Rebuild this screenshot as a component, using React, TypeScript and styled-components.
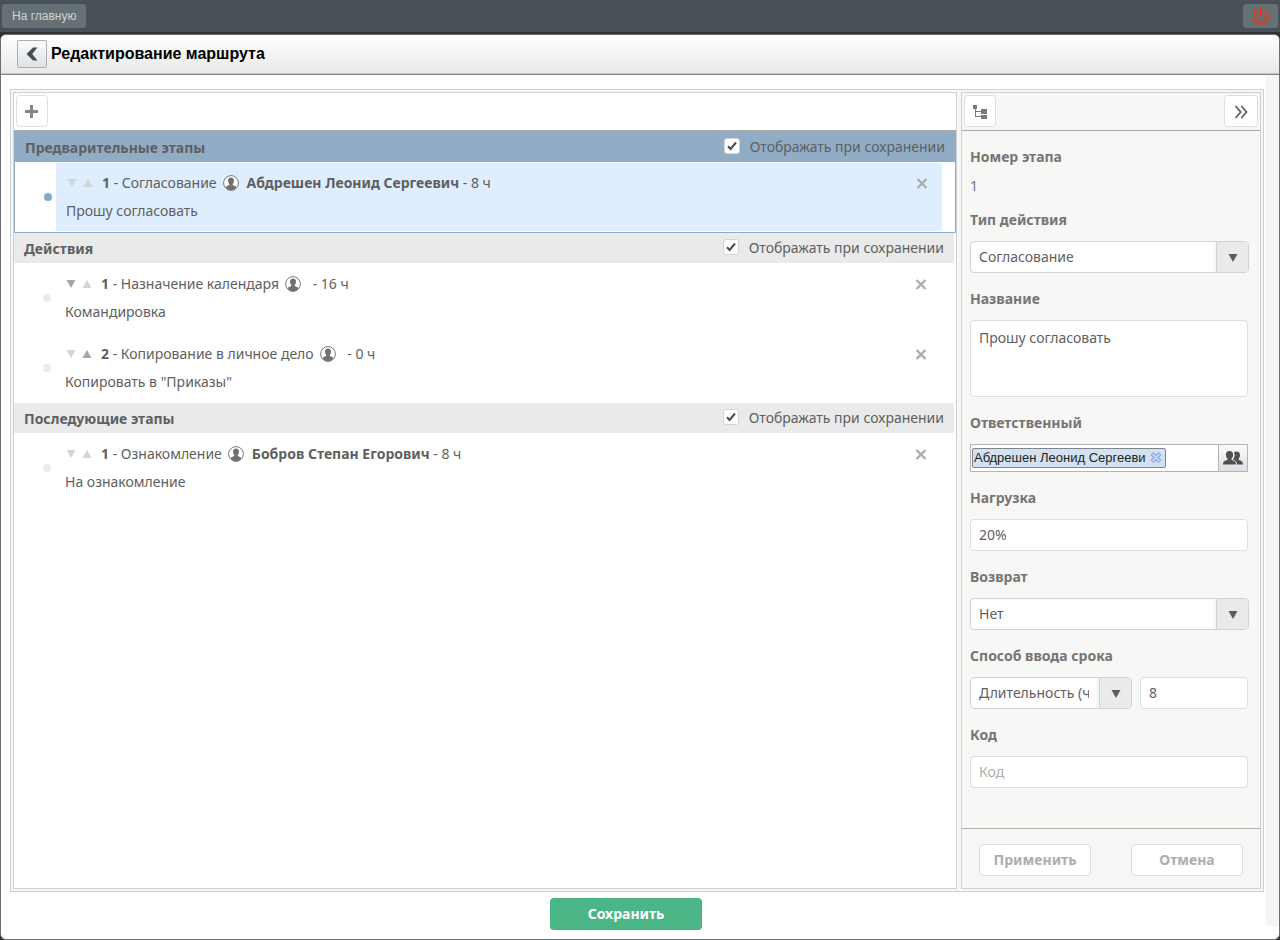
import React, { useState } from 'react';
import styled, { createGlobalStyle, css } from 'styled-components';

const ui = '"Noto Sans", "Open Sans", sans-serif';
const chrome = '"Liberation Sans", Arial, sans-serif';

const GlobalStyle = createGlobalStyle`
  *, *::before, *::after { box-sizing: border-box; }
  body { margin: 0; background: #333032; font-family: ${ui}; font-size: 14px; color: #5f5f5f; }
  button, input, select, textarea { font: inherit; color: inherit; margin: 0; }
  button { cursor: pointer; }
  h1, h2, p { margin: 0; }
`;

const Page = styled.div`
  min-height: 100vh;
  display: flex;
  flex-direction: column;
`;

const TopBar = styled.header`
  display: flex;
  justify-content: space-between;
  height: 32px;
  padding: 4px 2px;
  margin-bottom: 2px;
  background: #485158;
`;

const TopButton = styled.button<{ $icon?: boolean }>`
  height: 24px;
  min-width: 35px;
  padding: 0 ${p => (p.$icon ? 0 : 10)}px;
  display: flex;
  align-items: center;
  justify-content: center;
  border: 0;
  border-radius: 3px;
  background: #657075;
  color: #d2d4d4;
  font-family: ${chrome};
  font-size: 12px;
`;

const Window = styled.main`
  flex: 1;
  display: flex;
  flex-direction: column;
  border: 1px solid #6f6c72;
  border-radius: 6px;
  background: #fff;
  overflow: hidden;
`;

const TitleBar = styled.div`
  display: flex;
  align-items: center;
  gap: 4px;
  height: 40px;
  padding: 0 16px 2px;
  border-bottom: 1px solid #858585;
  box-shadow: inset 0 -1px #c8c8c8;
  background: linear-gradient(#fff, #e8e8e8);
`;

const Title = styled.h1`
  font: bold 16px ${chrome};
  color: #000;
`;

const BackButton = styled.button`
  width: 30px;
  height: 28px;
  padding: 0;
  display: grid;
  place-items: center;
  border: 1px solid #a9afb3;
  border-radius: 2px;
  background: linear-gradient(#fbfcfc, #dde2e6);
`;

const WindowBody = styled.div`
  flex: 1;
  display: flex;
`;

const Content = styled.div`
  flex: 1;
  display: flex;
  flex-direction: column;
  padding: 14px 1px 9px 9px;
`;

const Track = styled.div`
  width: 13px;
  margin: 0 0 13px 1px;
  background: #f5f5f5;
`;

const Frame = styled.div`
  flex: 1;
  display: flex;
  gap: 4px;
  padding: 2px;
  border: 1px solid #d0d0d0;
  background: #f7f7f7;
`;

const RoutePanel = styled.section`
  flex: 1;
  border: 1px solid #d0d0d0;
  background: #fff;
`;

const SidePanel = styled.form`
  width: 300px;
  display: flex;
  flex-direction: column;
  border: 1px solid #d0d0d0;
  background: #f7f7f5;
`;

const Toolbar = styled.div`
  display: flex;
  justify-content: space-between;
  height: 38px;
  padding: 2px;
  border-bottom: 1px solid #aaa;
`;

const ToolButton = styled.button<{ $wide?: boolean }>`
  width: ${p => (p.$wide ? 34 : 32)}px;
  height: 32px;
  padding: 2px 0 0;
  display: grid;
  place-items: center;
  border: 1px solid #dedede;
  border-radius: 4px;
  background: #fff;
`;

const Group = styled.section<{ $selected?: boolean }>`
  margin-right: 2px;
  ${p => p.$selected && css`
    margin-right: 0;
    border: 1px solid #91acc5;
  `}
`;

const GroupHeader = styled.div<{ $selected?: boolean }>`
  display: flex;
  justify-content: space-between;
  height: 30px;
  padding: 0 10px;
  background: ${p => (p.$selected ? '#91acc5' : '#eaeaea')};
`;

const GroupTitle = styled.h2`
  font-size: 14px;
  line-height: 32px;
  font-weight: bold;
`;

const CheckLabel = styled.label`
  display: flex;
  align-items: center;
  gap: 10px;
  height: 28px;
`;

const CheckBox = styled.span`
  display: grid;
  place-items: center;
  input, svg { grid-area: 1 / 1; }
  input {
    appearance: none;
    width: 16px;
    height: 16px;
    border: 1px solid #d4d4d4;
    border-radius: 3px;
    background: #fff;
  }
  svg { pointer-events: none; visibility: hidden; }
  input:checked + svg { visibility: visible; }
`;

const Row = styled.div`
  display: flex;
  align-items: center;
  height: 70px;
  padding: 1px 13px 1px 29px;
`;

const Dot = styled.span<{ $selected?: boolean }>`
  width: 8px;
  height: 8px;
  margin-right: 4px;
  border-radius: 50%;
  background: ${p => (p.$selected ? '#86abc8' : '#ebebeb')};
`;

const RowContent = styled.div<{ $selected?: boolean }>`
  flex: 1;
  height: 68px;
  padding: 6px 14px 6px 10px;
  line-height: 28px;
  background: ${p => (p.$selected ? '#deeefe' : 'transparent')};
`;

const RowLine = styled.div`
  display: flex;
  align-items: center;
  height: 28px;
  white-space: pre;
`;

const Arrows = styled.span`
  display: flex;
  gap: 4px;
  margin-right: 8px;
`;

const IconButton = styled.button`
  display: grid;
  place-items: center;
  padding: 0;
  border: 0;
  background: none;
`;

const RemoveButton = styled(IconButton)`
  margin-left: auto;
`;

const UserMark = styled.svg`
  margin: 0 8px 0 6px;
`;

const Fields = styled.div`
  flex: 1;
  padding: 10px 12px 10px 8px;
`;

const Field = styled.div`
  margin-bottom: 10px;
`;

const Caption = styled.label`
  display: block;
  margin-bottom: 5px;
  line-height: 32px;
  font-weight: bold;
  color: #757575;
`;

const StepNumber = styled.output`
  display: block;
  line-height: 16px;
  color: #6b7785;
`;

const TextInput = styled.input`
  display: block;
  width: 100%;
  height: 32px;
  padding: 0 8px 2px;
  border: 1px solid #dedede;
  border-radius: 4px;
  background: #fff;
  &::placeholder { color: #adadad; opacity: 1; }
`;

const TextArea = styled.textarea`
  display: block;
  width: 100%;
  height: 77px;
  padding: 7px 8px;
  border: 1px solid #dedede;
  border-radius: 4px;
  line-height: 20px;
  resize: none;
`;

const SelectBox = styled.div`
  display: grid;
  grid-template-columns: 1fr 32px;
  width: calc(100% + 1px);
  height: 32px;
  border: 1px solid #d2d2d2;
  border-radius: 4px;
  background: #fff;
  overflow: hidden;
`;

const Select = styled.select`
  grid-area: 1 / 1 / 2 / 3;
  min-width: 0;
  appearance: none;
  padding: 0 42px 2px 8px;
  border: 0;
  background: transparent;
`;

const SelectArrow = styled.span`
  grid-area: 1 / 2;
  display: grid;
  place-items: center;
  padding-top: 2px;
  pointer-events: none;
  border-left: 1px solid #d2d2d2;
  box-shadow: -3px 0 #f7f7f7;
  background: #eaeaea;
`;

const TermLine = styled.div`
  display: grid;
  grid-template-columns: 161px 1fr;
  gap: 9px;
`;

const Picker = styled.div`
  display: flex;
  height: 28px;
  border: 1px solid #b4b4b4;
  background: #fff;
  font-family: ${chrome};
  font-size: 13px;
`;

const Token = styled.span`
  display: flex;
  align-items: center;
  height: 20px;
  margin: 3px 0 0 1px;
  padding: 0 3px 2px 1px;
  gap: 4px;
  border: 1px solid #7f858c;
  border-radius: 2px;
  background: #d4e1f0;
  color: #222;
  white-space: nowrap;
`;

const PickerInput = styled.input`
  flex: 1;
  min-width: 0;
  border: 0;
  padding: 0 4px;
  outline: 0;
  background: none;
`;

const PickerButton = styled(IconButton)`
  width: 29px;
  border-left: 1px solid #b4b4b4;
  background: linear-gradient(#fafbfb, #dce0e3);
`;

const SideFooter = styled.div`
  display: flex;
  justify-content: space-between;
  padding: 15px 17px 12px;
  border-top: 1px solid #b0b0ab;
`;

const PlainButton = styled.button`
  width: 112px;
  height: 32px;
  padding: 0 0 2px;
  border: 1px solid #dedede;
  border-radius: 4px;
  background: #fff;
  color: #adadad;
  font-weight: bold;
`;

const SaveLine = styled.div`
  display: flex;
  justify-content: center;
  padding: 6px 22px 0 0;
`;

const SaveButton = styled.button`
  width: 152px;
  height: 32px;
  padding: 0 0 2px;
  border: 0;
  border-radius: 4px;
  background: #4ab686;
  color: #fff;
  font-weight: bold;
`;

function MoveIcon({ up, active }: { up?: boolean; active?: boolean }) {
  return (
    <svg width="12" height="10" viewBox="0 0 12 10" fill={active ? '#a6a6a6' : '#d2d4d6'}>
      <path d={up ? 'M6 1l4.5 8h-9z' : 'M1.5 1h9L6 9z'} />
    </svg>
  );
}

function UserIcon() {
  return (
    <UserMark width="16" height="16" viewBox="0 0 16 16">
      <circle cx="8" cy="8" r="7.4" fill="#fff" stroke="#777" />
      <path
        fill="#707070"
        d="M8 2.6c1.9 0 3 1.3 3 3.1 0 1.300-.5 2.500-1.300 3.200v1.200c.5.500 2.600.8 3.800 1.900C12.300 14 10.300 15.300 8 15.300S3.700 14 2.500 12c1.200-1.100 3.300-1.400 3.800-1.900V8.900C5.500 8.200 5 7 5 5.700c0-1.800 1.100-3.100 3-3.100z"
      />
    </UserMark>
  );
}

function Dropdown({ id, options }: { id: string; options: string[] }) {
  return (
    <SelectBox>
      <Select id={id} defaultValue={options[0]}>
        {options.map(o => <option key={o}>{o}</option>)}
      </Select>
      <SelectArrow>
        <svg width="10" height="8" viewBox="0 0 10 8" fill="#5c5c5c"><path d="M.5 0h9L5 8z" /></svg>
      </SelectArrow>
    </SelectBox>
  );
}

interface Step {
  action: string;
  person: string;
  term: string;
  note: string;
}

interface StageGroup {
  title: string;
  steps: Step[];
}

const groups: StageGroup[] = [
  {
    title: 'Предварительные этапы',
    steps: [{ action: 'Согласование', person: 'Абдрешен Леонид Сергеевич', term: '8 ч', note: 'Прошу согласовать' }],
  },
  {
    title: 'Действия',
    steps: [
      { action: 'Назначение календаря', person: '', term: '16 ч', note: 'Командировка' },
      { action: 'Копирование в личное дело', person: '', term: '0 ч', note: 'Копировать в "Приказы"' },
    ],
  },
  {
    title: 'Последующие этапы',
    steps: [{ action: 'Ознакомление', person: 'Бобров Степан Егорович', term: '8 ч', note: 'На ознакомление' }],
  },
];

function StageList({ group, selected }: { group: StageGroup; selected: boolean }) {
  const [shown, setShown] = useState(true);
  return (
    <Group $selected={selected}>
      <GroupHeader $selected={selected}>
        <GroupTitle>{group.title}</GroupTitle>
        <CheckLabel>
          <CheckBox>
            <input type="checkbox" checked={shown} onChange={e => setShown(e.target.checked)} />
            <svg width="10" height="10" viewBox="0 0 10 10" fill="none" stroke="#4c4c4c" strokeWidth="2">
              <path d="M1 5.200l2.600 2.700L9 1.500" />
            </svg>
          </CheckBox>
          Отображать при сохранении
        </CheckLabel>
      </GroupHeader>
      {group.steps.map((s, i) => (
        <Row key={s.note}>
          <Dot $selected={selected} />
          <RowContent $selected={selected}>
            <RowLine>
              <Arrows>
                <IconButton type="button" aria-label="Ниже"><MoveIcon active={i < group.steps.length - 1} /></IconButton>
                <IconButton type="button" aria-label="Выше"><MoveIcon up active={i > 0} /></IconButton>
              </Arrows>
              <span><b>{i + 1}</b> - {s.action}</span>
              <UserIcon />
              <span><b>{s.person}</b> - {s.term}</span>
              <RemoveButton type="button" aria-label="Удалить">
                <svg width="12" height="12" viewBox="0 0 12 12" stroke="#adadad" strokeWidth="2.400">
                  <path d="M1.500 2l9 9M10.500 2l-9 9" />
                </svg>
              </RemoveButton>
            </RowLine>
            <p>{s.note}</p>
          </RowContent>
        </Row>
      ))}
    </Group>
  );
}

export default function App() {
  return (
    <Page>
      <GlobalStyle />
      <TopBar>
        <TopButton type="button">На главную</TopButton>
        <TopButton $icon type="button" aria-label="Выход">
          <svg width="18" height="18" viewBox="0 0 18 18" fill="none" stroke="#e23b1a" strokeWidth="2.400">
            <path d="M5.300 3.600a6.800 6.800 0 1 0 7.400 0M9 1v8.600" />
          </svg>
        </TopButton>
      </TopBar>
      <Window>
        <TitleBar>
          <BackButton type="button" aria-label="Назад">
            <svg width="12" height="14" viewBox="0 0 12 14" fill="#4d4d4d">
              <path d="M7 .5h4.500L6.200 7l5.300 6.500H7L.5 7z" />
            </svg>
          </BackButton>
          <Title>Редактирование маршрута</Title>
        </TitleBar>
        <WindowBody>
          <Content>
            <Frame>
              <RoutePanel>
                <Toolbar>
                  <ToolButton type="button" aria-label="Добавить">
                    <svg width="14" height="14" viewBox="0 0 14 14" fill="#858585">
                      <path d="M5 0h3v5h5v3H8v5H5V8H0V5h5z" />
                    </svg>
                  </ToolButton>
                </Toolbar>
                {groups.map((g, i) => <StageList key={g.title} group={g} selected={i === 0} />)}
              </RoutePanel>
              <SidePanel onSubmit={e => e.preventDefault()}>
                <Toolbar>
                  <ToolButton type="button" aria-label="Дерево">
                    <svg width="14" height="14" viewBox="0 0 14 14" fill="#7a7a7a">
                      <path d="M0 0h4v4H0zM8 4h6v5H8zM8 10h6v4H8zM2 4h1v2h5v1H3v4h5v1H2z" />
                    </svg>
                  </ToolButton>
                  <ToolButton $wide type="button" aria-label="Свернуть">
                    <svg width="14" height="14" viewBox="0 0 14 14" fill="none" stroke="#5f5f5f" strokeWidth="1.800">
                      <path d="M1.500 1l5.200 6-5.200 6M7.300 1l5.200 6-5.200 6" />
                    </svg>
                  </ToolButton>
                </Toolbar>
                <Fields>
                  <Field>
                    <Caption htmlFor="number">Номер этапа</Caption>
                    <StepNumber id="number">1</StepNumber>
                  </Field>
                  <Field>
                    <Caption htmlFor="action">Тип действия</Caption>
                    <Dropdown id="action" options={['Согласование', 'Ознакомление']} />
                  </Field>
                  <Field>
                    <Caption htmlFor="name">Название</Caption>
                    <TextArea id="name" defaultValue="Прошу согласовать" />
                  </Field>
                  <Field>
                    <Caption htmlFor="person">Ответственный</Caption>
                    <Picker>
                      <Token>
                        Абдрешен Леонид Сергееви
                        <IconButton type="button" aria-label="Убрать">
                          <svg width="12" height="12" viewBox="0 0 12 12">
                            <path d="M2 2.500l8 8M10 2.500l-8 8" stroke="#86a6da" strokeWidth="4" />
                            <path d="M2.500 3l7 7M9.500 3l-7 7" stroke="#c3d5f1" strokeWidth="2" />
                          </svg>
                        </IconButton>
                      </Token>
                      <PickerInput id="person" />
                      <PickerButton type="button" aria-label="Выбрать">
                        <svg width="20" height="14" viewBox="0 0 20 14" fill="#505050">
                          <path d="M6.500 0c2.300 0 3.600 1.500 3.600 3.500 0 1.800-.6 3.200-1.600 4.100v1.200c1 .8 4 1 4.300 3.100l.2 1.600H0l.2-1.600c.3-2.100 3.300-2.300 4.300-3.100V7.600C3.500 6.700 2.900 5.300 2.900 3.500 2.900 1.500 4.200 0 6.500 0z" />
                          <path d="M11 1.600C11.600.8 12.500.5 13.600.5c2.200 0 3.400 1.400 3.400 3.400 0 1.600-.5 2.900-1.400 3.700v1.200c1 .7 3.800.9 4.100 2.900l.3 1.800h-6c0-2.600-1.300-3.500-2.600-4.200L10 8.600c1-1.300 1.600-2.800 1.600-4.600 0-.9-.2-1.700-.6-2.400z" />
                        </svg>
                      </PickerButton>
                    </Picker>
                  </Field>
                  <Field>
                    <Caption htmlFor="load">Нагрузка</Caption>
                    <TextInput id="load" defaultValue="20%" />
                  </Field>
                  <Field>
                    <Caption htmlFor="back">Возврат</Caption>
                    <Dropdown id="back" options={['Нет', 'Да']} />
                  </Field>
                  <Field>
                    <Caption htmlFor="term">Способ ввода срока</Caption>
                    <TermLine>
                      <Dropdown id="term" options={['Длительность (ч)', 'Дата']} />
                      <TextInput aria-label="Срок" defaultValue="8" />
                    </TermLine>
                  </Field>
                  <Field>
                    <Caption htmlFor="code">Код</Caption>
                    <TextInput id="code" placeholder="Код" />
                  </Field>
                </Fields>
                <SideFooter>
                  <PlainButton type="submit">Применить</PlainButton>
                  <PlainButton type="reset">Отмена</PlainButton>
                </SideFooter>
              </SidePanel>
            </Frame>
            <SaveLine>
              <SaveButton type="button">Сохранить</SaveButton>
            </SaveLine>
          </Content>
          <Track />
        </WindowBody>
      </Window>
    </Page>
  );
}
